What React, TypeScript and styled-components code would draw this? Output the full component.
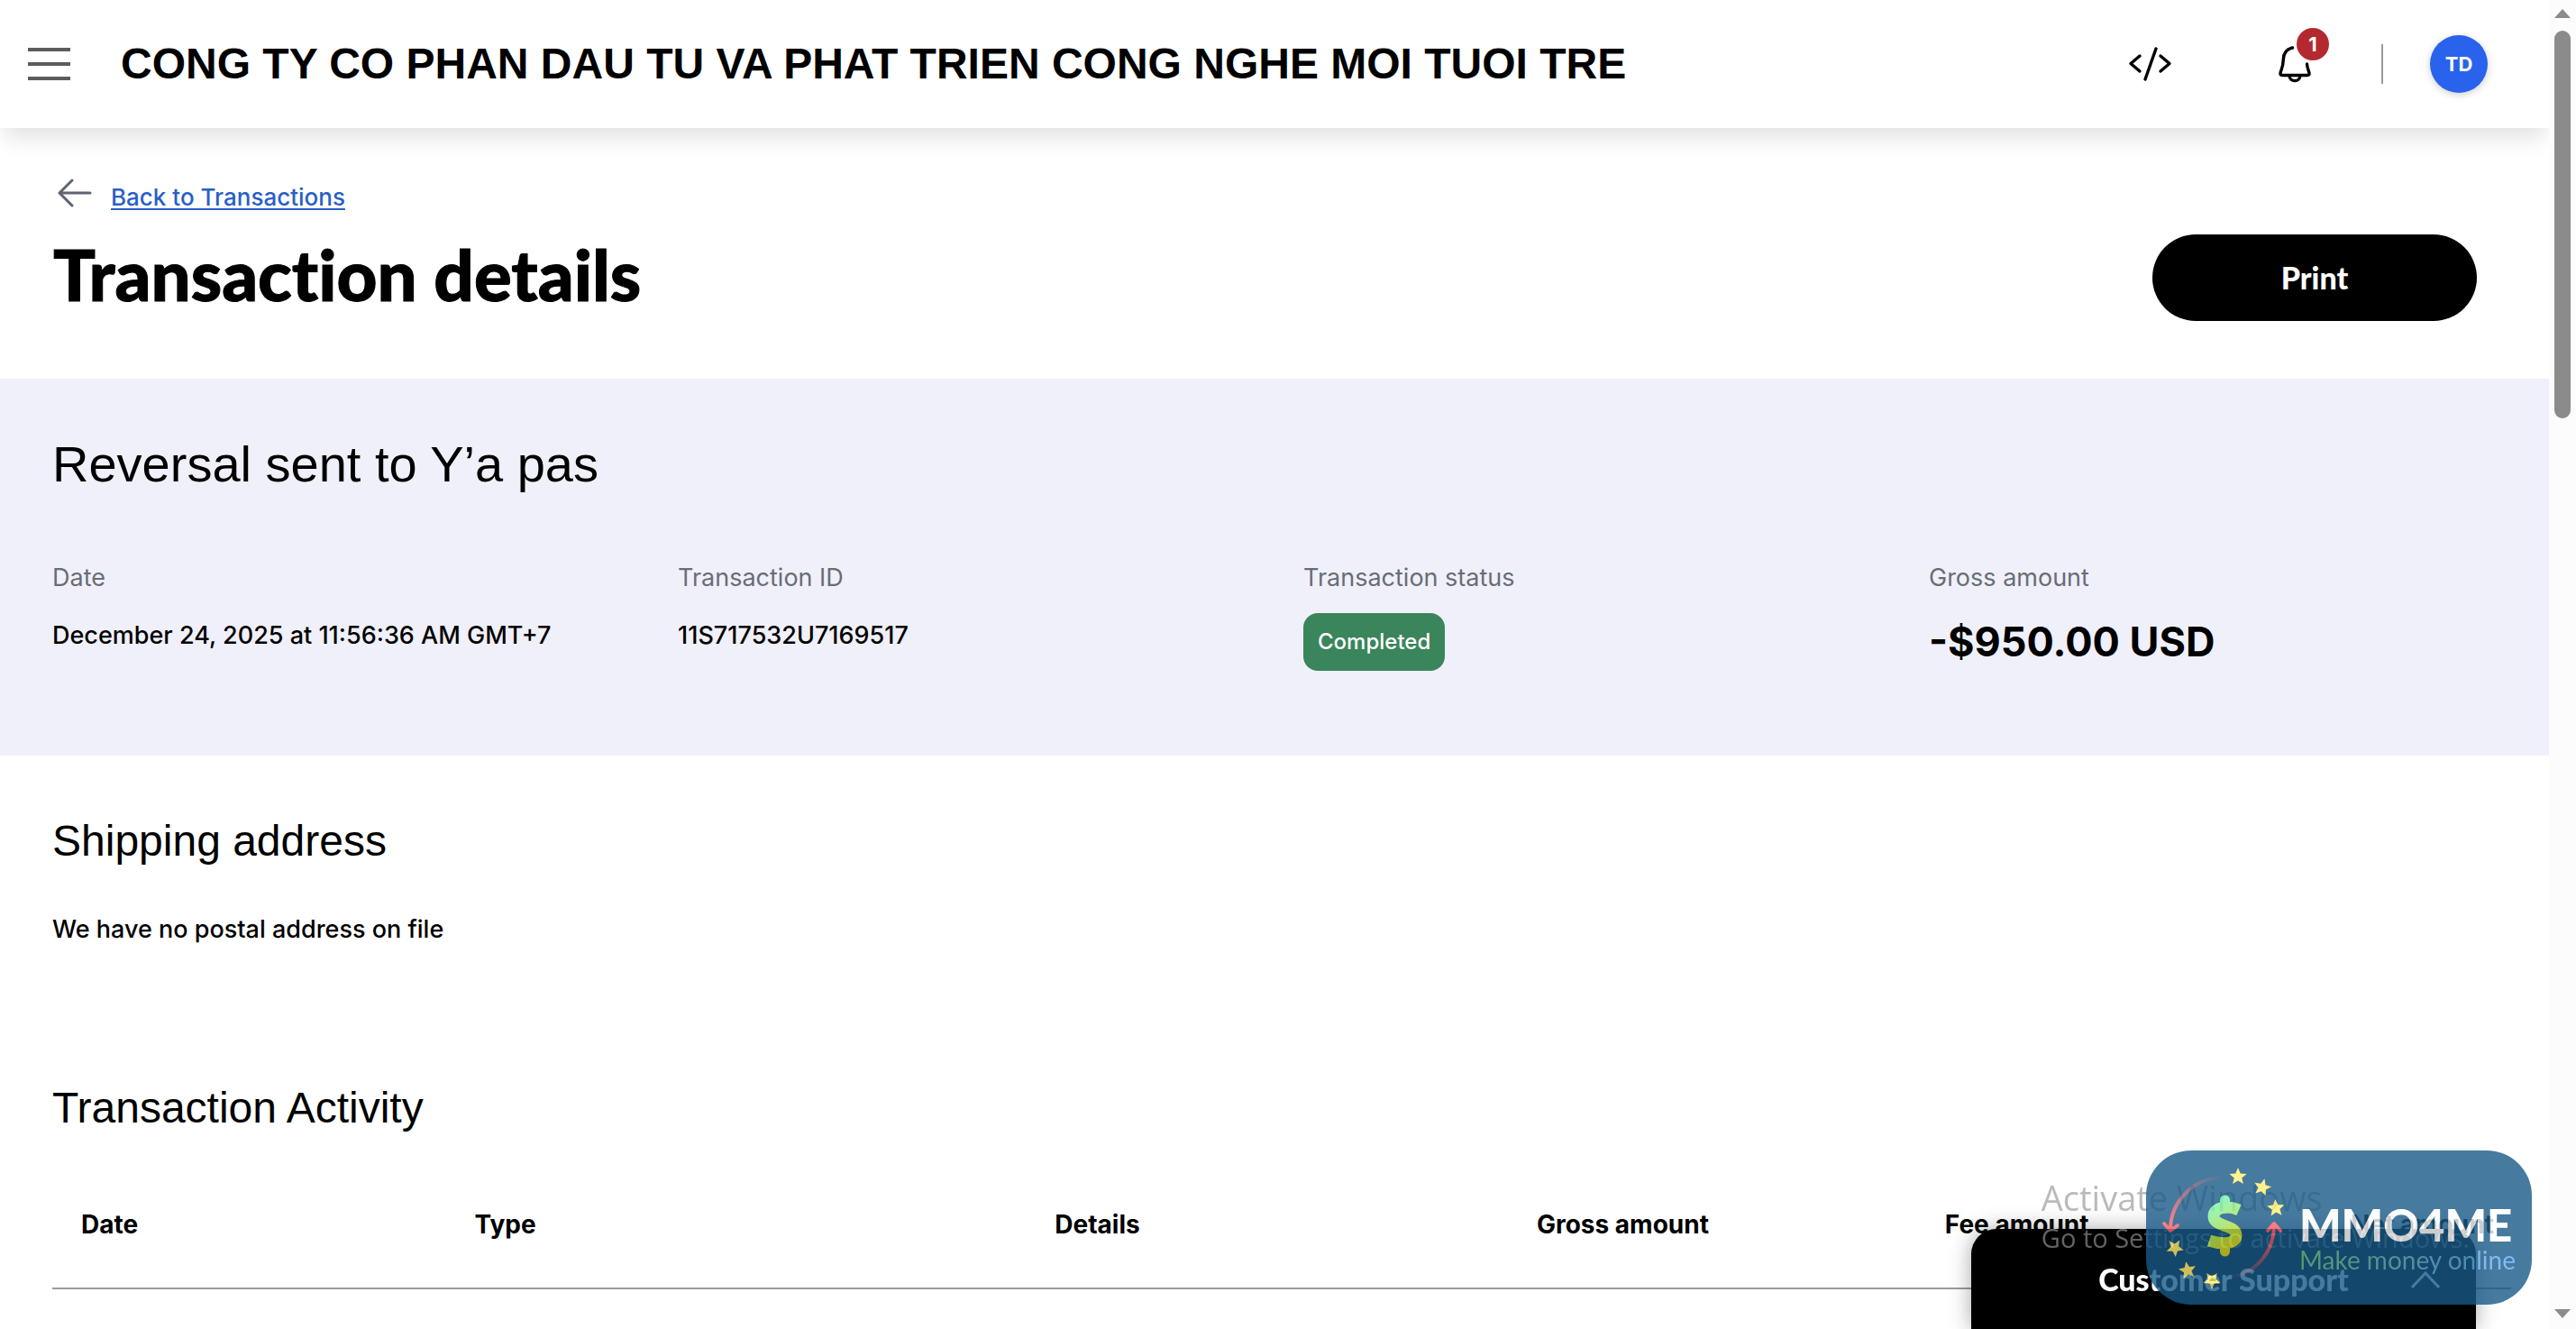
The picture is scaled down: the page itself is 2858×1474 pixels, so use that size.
import React from 'react';
import styled, { createGlobalStyle } from 'styled-components';

const heading = '"Liberation Sans", Arial, sans-serif';
const body = 'Inter, "Liberation Sans", sans-serif';
const display = 'Lato, "Liberation Sans", sans-serif';

const GlobalStyle = createGlobalStyle`
  *, *::before, *::after { box-sizing: border-box; }
  body { margin: 0; background: #fff; color: #000; font-family: ${body}; }
  h1, h2, h3, p, dl, dd { margin: 0; }
  button { border: 0; padding: 0; background: none; color: inherit; font: inherit; cursor: pointer; }
  svg { display: block; }
`;

const Shell = styled.div`
  display: flex;
  height: 100vh;
  overflow: hidden;
`;

const Page = styled.div`
  flex: 1;
  min-width: 0;
  overflow: hidden;
`;

const TopBar = styled.header`
  display: flex;
  align-items: center;
  height: 142px;
  padding: 0 68px 0 31px;
  background: #fff;
  box-shadow: 0 14px 24px -4px rgba(0, 0, 0, 0.12);
`;

const CompanyName = styled.strong`
  flex: 1;
  margin-left: 56px;
  font: 700 48px/56px ${heading};
  white-space: nowrap;
`;

const IconGroup = styled.nav`
  display: flex;
  align-items: center;
  gap: 112px;
`;

const IconButton = styled.button`
  position: relative;
  display: block;
`;

const CountBadge = styled.span`
  position: absolute;
  top: -18px;
  right: -16px;
  width: 36px;
  height: 36px;
  border-radius: 50%;
  background: #b4292f;
  color: #fff;
  font: 700 22px/36px ${body};
  text-align: center;
`;

const Divider = styled.span`
  width: 2px;
  height: 44px;
  margin: 0 52px 0 74px;
  background: #999;
`;

const Avatar = styled.button`
  width: 64px;
  height: 64px;
  border-radius: 50%;
  background: #2962ec;
  box-shadow: 0 2px 8px rgba(0, 0, 0, 0.2);
  color: #fff;
  font: 700 22px/64px ${body};
`;

const PageHead = styled.div`
  padding: 56px 80px 64px 59px;
`;

const BackRow = styled.div`
  display: flex;
  align-items: flex-start;
  gap: 16px;
`;

const BackLink = styled.a`
  color: #2a5fc6;
  font: 500 26px/42px ${body};
  text-decoration: underline;
  text-decoration-thickness: 2px;
  text-underline-offset: 3px;
`;

const TitleRow = styled.div`
  display: flex;
  justify-content: space-between;
  margin-top: 20px;
`;

const PageTitle = styled.h1`
  font: 900 78px/88px ${display};
  font-variant-ligatures: none;
  -webkit-text-stroke: 1px currentColor;
`;

const PrintButton = styled.button`
  width: 360px;
  height: 96px;
  border-radius: 48px;
  background: #000;
  color: #fff;
  font: 900 34px/40px ${display};
`;

const Summary = styled.section`
  padding: 63px 42px 94px 58px;
  background: #f0f0fa;
`;

const SummaryTitle = styled.h2`
  font: 400 56px/64px ${heading};
`;

const Facts = styled.dl`
  display: grid;
  grid-template-columns: repeat(4, 1fr);
  column-gap: 48px;
  margin-top: 73px;
`;

const FactLabel = styled.dt`
  color: #686d74;
  font: 400 27px/42px ${body};
`;

const FactValue = styled.dd`
  margin-top: 18px;
  font: 500 27px/50px ${body};
`;

const StatusTag = styled.span`
  display: inline-block;
  padding: 0 16px;
  border-radius: 16px;
  background: #3a855b;
  color: #fff;
  font: 500 24px/64px ${body};
`;

const Amount = styled.strong`
  font: 700 45px/64px ${body};
`;

const Content = styled.main`
  display: flex;
  flex-direction: column;
  gap: 150px;
  padding: 67px 42px 0 58px;
`;

const SectionTitle = styled.h2`
  font: 400 48px/56px ${heading};
`;

const SectionText = styled.p`
  margin-top: 50px;
  font: 500 27px/40px ${body};
`;

const ActivityTable = styled.table`
  width: 100%;
  table-layout: fixed;
  border-collapse: separate;
  border-spacing: 0;
`;

const HeadCell = styled.th<{ $share: number }>`
  width: ${(p) => p.$share}%;
  padding: 81px 0 50px 32px;
  border-bottom: 2px solid #989c9e;
  font: 700 28px/40px ${body};
  text-align: left;
  white-space: nowrap;
`;

const ScrollRail = styled.div`
  display: flex;
  flex-direction: column;
  align-items: center;
  width: 30px;
  padding: 10px 0 12px;
  background: #fcfcfc;
`;

const ScrollThumb = styled.div`
  flex: 0 0 430px;
  width: 18px;
  margin: 14px 0 auto;
  border-radius: 9px;
  background: #8b8b8b;
`;

const SupportBar = styled.button`
  position: fixed;
  right: 111px;
  bottom: 0;
  display: grid;
  grid-template-columns: 1fr auto 1fr;
  align-items: center;
  width: 560px;
  height: 111px;
  padding: 0 40px;
  border-radius: 28px 28px 0 0;
  background: #000;
  box-shadow: 0 0 24px rgba(0, 0, 0, 0.35);
  color: #fff;
  font: 900 34px/40px ${display};

  span { grid-column: 2; }
  svg { justify-self: end; }
`;

const ActivationNotice = styled.div`
  position: fixed;
  right: 118px;
  bottom: 80px;
  color: rgba(150, 150, 150, 0.66);
  font-family: "Open Sans", "Noto Sans", sans-serif;
  white-space: nowrap;
  pointer-events: none;
`;

const NoticeTitle = styled.p`
  font-size: 38px;
  line-height: 48px;
`;

const NoticeText = styled.p`
  font-size: 29px;
  line-height: 42px;
`;

const Brand = styled.aside`
  position: fixed;
  right: 49px;
  bottom: 27px;
  display: flex;
  align-items: flex-end;
  width: 428px;
  height: 171px;
  border-radius: 50px;
  background: #185986;
  opacity: 0.8;
`;

const BrandText = styled.div`
  padding-bottom: 34px;
  white-space: nowrap;
`;

const BrandName = styled.p`
  color: #fff;
  font: 900 49px/46px ${display};
`;

const BrandTagline = styled.p`
  background: linear-gradient(90deg, #6fc08a, #63a9ff);
  background-clip: text;
  -webkit-background-clip: text;
  color: transparent;
  font: 400 28px/32px ${display};
`;

const star = 'M0-10 2.7-3.6 9.6-3.1 4.3 1.4 5.9 8.1 0 4.5-5.9 8.1-4.3 1.4-9.6-3.1-2.7-3.6Z';

const stars = [
  { x: 102, y: 29, turn: 0 },
  { x: 129, y: 41, turn: 14 },
  { x: 144, y: 64, turn: -4 },
  { x: 32, y: 108, turn: 176 },
  { x: 46, y: 133, turn: -10 },
  { x: 73, y: 144, turn: 180 },
];

function BrandMark() {
  return (
    <svg width="170" height="171" viewBox="0 0 170 171" fill="none" aria-hidden="true">
      <defs>
        <linearGradient id="coin" gradientUnits="userSpaceOnUse" x1="72" y1="60" x2="104" y2="108">
          <stop offset="0" stopColor="#73f5b4" />
          <stop offset="0.55" stopColor="#b4e655" />
          <stop offset="1" stopColor="#dcd21c" />
        </linearGradient>
        <linearGradient id="down" gradientUnits="userSpaceOnUse" x1="84" y1="28" x2="30" y2="84">
          <stop offset="0" stopColor="#f15b66" stopOpacity="0" />
          <stop offset="1" stopColor="#fb6470" />
        </linearGradient>
        <linearGradient id="up" gradientUnits="userSpaceOnUse" x1="92" y1="142" x2="140" y2="86">
          <stop offset="0" stopColor="#f15b66" stopOpacity="0" />
          <stop offset="1" stopColor="#fb6470" />
        </linearGradient>
      </defs>
      <g stroke="url(#down)" strokeWidth="4" strokeLinecap="round" strokeLinejoin="round">
        <path d="M84 30C54 30 27 56 27 88" />
        <path d="M20 81 27 89 35 83" />
      </g>
      <g stroke="url(#up)" strokeWidth="4" strokeLinecap="round" strokeLinejoin="round">
        <path d="M92 140C120 138 142 114 142 82" />
        <path d="M135 89 142 81 149 89" />
      </g>
      <g stroke="url(#coin)">
        <path strokeWidth="13" d="M103 66C92 61 75 62 75 73C75 85 100 82 100 94C100 105 82 104 70 100" />
        <path strokeWidth="11" strokeLinecap="round" d="M87.500 55V64M87.500 102V112" />
      </g>
      {stars.map((s) => (
        <path key={`${s.x}`} d={star} fill="#ffef70" transform={`translate(${s.x} ${s.y}) rotate(${s.turn})`} />
      ))}
    </svg>
  );
}

const columns = [
  { name: 'Date', share: 16 },
  { name: 'Type', share: 23.6 },
  { name: 'Details', share: 19.6 },
  { name: 'Gross amount', share: 16.6 },
  { name: 'Fee amount', share: 16.5 },
  { name: 'Net amount', share: 7.7 },
];

export default function App() {
  return (
    <>
      <GlobalStyle />
      <Shell>
        <Page>
          <TopBar>
            <IconButton aria-label="Open menu">
              <svg width="47" height="36" viewBox="0 0 47 36" stroke="#5c5c5c" strokeWidth="4">
                <path d="M0 2H47M0 18H47M0 34H47" />
              </svg>
            </IconButton>
            <CompanyName>CONG TY CO PHAN DAU TU VA PHAT TRIEN CONG NGHE MOI TUOI TRE</CompanyName>
            <IconGroup>
              <IconButton aria-label="Developer tools">
                <svg width="52" height="52" viewBox="0 0 52 52" fill="none" stroke="#000" strokeWidth="3.4" strokeLinecap="round" strokeLinejoin="round">
                  <path d="M14 17 4 25.500 14 34M32 9 20 43M37 17 47 25.500 37 34" />
                </svg>
              </IconButton>
              <IconButton aria-label="Notifications">
                <svg width="44" height="44" viewBox="0 0 44 44" fill="none" stroke="#000" strokeWidth="3.4" strokeLinecap="round" strokeLinejoin="round">
                  <path d="M19.500 4C12.500 5.500 9.500 11 9.300 17C9.100 24 8 26 6.400 30.500C5.500 33.500 6 34.500 8.500 34.500H35.500C38 34.500 38.500 33.500 37.600 30.500C36.500 27 35.700 25.500 35.500 22" />
                  <path d="M16 35C16.500 42.500 27.500 42.500 28 35" />
                </svg>
                <CountBadge>1</CountBadge>
              </IconButton>
            </IconGroup>
            <Divider />
            <Avatar aria-label="Account TD">TD</Avatar>
          </TopBar>

          <PageHead>
            <BackRow>
              <svg width="48" height="32" viewBox="0 0 48 32" fill="none" stroke="#5f6470" strokeWidth="3" strokeLinejoin="round" strokeLinecap="round" aria-hidden="true">
                <path d="M21 2 7 16 21 30M7 16H41" />
              </svg>
              <BackLink href="#transactions">Back to Transactions</BackLink>
            </BackRow>
            <TitleRow>
              <PageTitle>Transaction details</PageTitle>
              <PrintButton>Print</PrintButton>
            </TitleRow>
          </PageHead>

          <Summary>
            <SummaryTitle>Reversal sent to Y’a pas</SummaryTitle>
            <Facts>
              <div>
                <FactLabel>Date</FactLabel>
                <FactValue>December 24, 2025 at 11:56:36 AM GMT+7</FactValue>
              </div>
              <div>
                <FactLabel>Transaction ID</FactLabel>
                <FactValue>11S717532U7169517</FactValue>
              </div>
              <div>
                <FactLabel>Transaction status</FactLabel>
                <FactValue>
                  <StatusTag>Completed</StatusTag>
                </FactValue>
              </div>
              <div>
                <FactLabel>Gross amount</FactLabel>
                <FactValue>
                  <Amount>-$950.00 USD</Amount>
                </FactValue>
              </div>
            </Facts>
          </Summary>

          <Content>
            <section>
              <SectionTitle>Shipping address</SectionTitle>
              <SectionText>We have no postal address on file</SectionText>
            </section>
            <section>
              <SectionTitle>Transaction Activity</SectionTitle>
              <ActivityTable>
                <thead>
                  <tr>
                    {columns.map((c) => (
                      <HeadCell key={c.name} scope="col" $share={c.share}>
                        {c.name}
                      </HeadCell>
                    ))}
                  </tr>
                </thead>
              </ActivityTable>
            </section>
          </Content>
        </Page>

        <ScrollRail aria-hidden="true">
          <svg width="18" height="10" viewBox="0 0 18 10" fill="#8b8b8b">
            <path d="M9 0 18 10H0Z" />
          </svg>
          <ScrollThumb />
          <svg width="18" height="10" viewBox="0 0 18 10" fill="#8b8b8b">
            <path d="M0 0H18L9 10Z" />
          </svg>
        </ScrollRail>
      </Shell>

      <SupportBar>
        <span>Customer Support</span>
        <svg width="32" height="20" viewBox="0 0 32 20" fill="none" stroke="#fff" strokeWidth="3" aria-hidden="true">
          <path d="M1 19 16 3 31 19" />
        </svg>
      </SupportBar>

      <ActivationNotice>
        <NoticeTitle>Activate Windows</NoticeTitle>
        <NoticeText>Go to Settings to activate Windows.</NoticeText>
      </ActivationNotice>

      <Brand>
        <BrandMark />
        <BrandText>
          <BrandName>MMO4ME</BrandName>
          <BrandTagline>Make money online</BrandTagline>
        </BrandText>
      </Brand>
    </>
  );
}
